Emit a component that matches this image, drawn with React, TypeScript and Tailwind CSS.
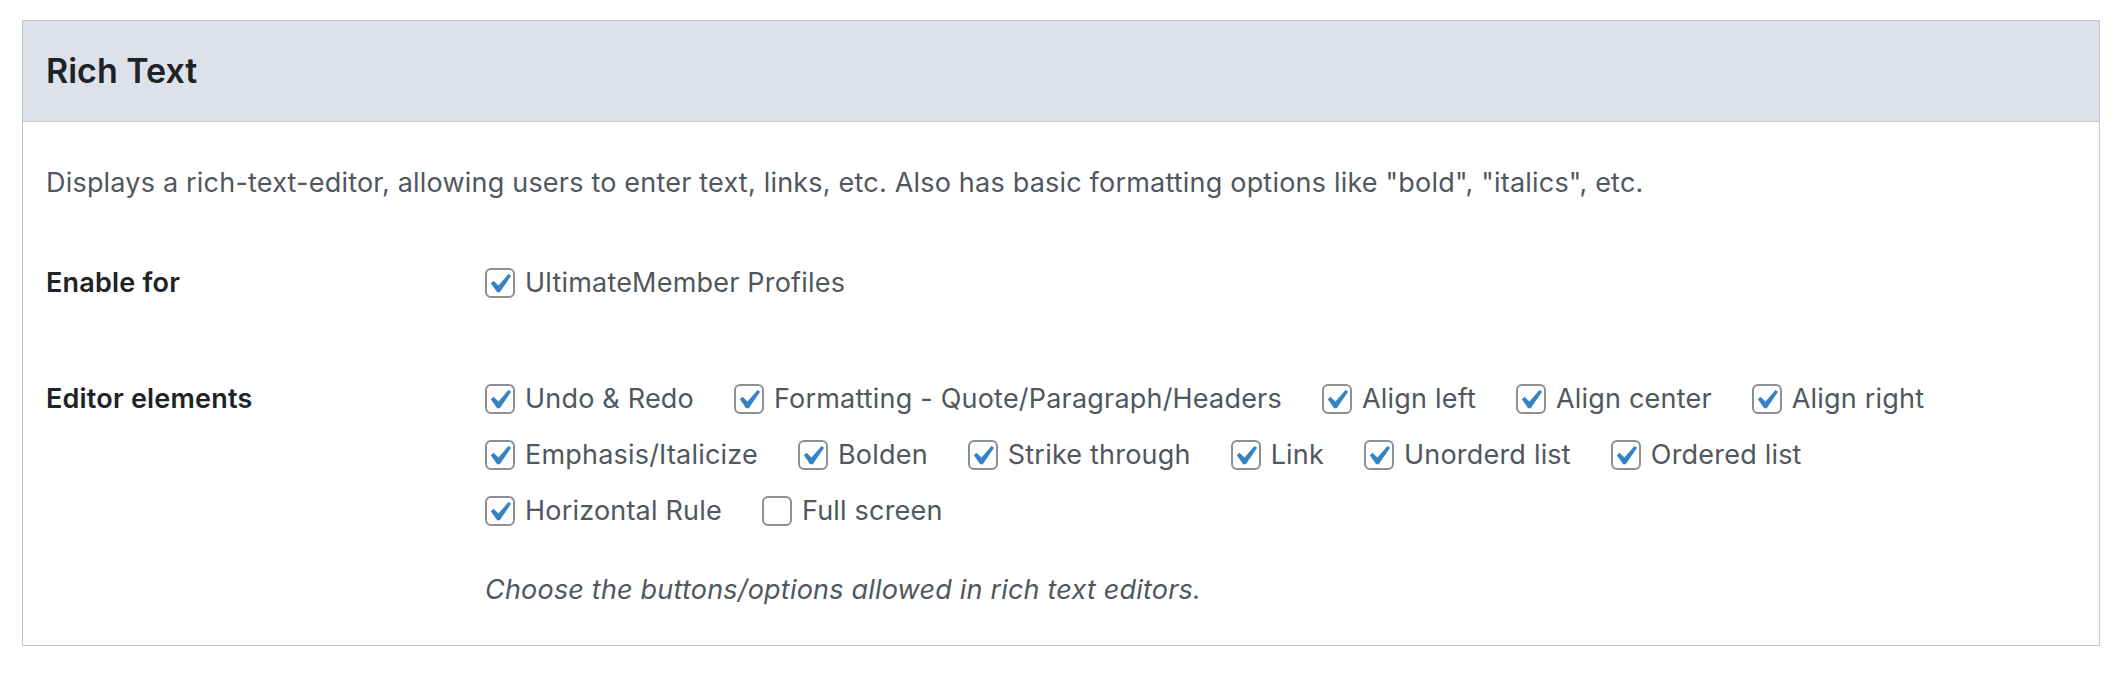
import React from 'react';

type Opt = { label: string; checked: boolean };

const rows: Opt[][] = [
  [
    { label: 'Undo & Redo', checked: true },
    { label: 'Formatting - Quote/Paragraph/Headers', checked: true },
    { label: 'Align left', checked: true },
    { label: 'Align center', checked: true },
    { label: 'Align right', checked: true },
  ],
  [
    { label: 'Emphasis/Italicize', checked: true },
    { label: 'Bolden', checked: true },
    { label: 'Strike through', checked: true },
    { label: 'Link', checked: true },
    { label: 'Unorderd list', checked: true },
    { label: 'Ordered list', checked: true },
  ],
  [
    { label: 'Horizontal Rule', checked: true },
    { label: 'Full screen', checked: false },
  ],
];

// WP style checkbox, tick taken from the admin stylesheet
const Checkbox: React.FC<{ checked: boolean }> = ({ checked }) => (
  <span className="flex h-[30px] w-[30px] shrink-0 items-center justify-center rounded-[6px] border-2 border-[#8c8f94] bg-white">
    {checked && (
      <svg viewBox="3.81 2.86 13.33 13.33" className="h-[26px] w-[26px]">
        <path d="M14.83 4.89l1.34.94-5.81 8.38H9.02L5.78 9.67l1.34-1.25 2.57 2.4z" fill="#3582c4" />
      </svg>
    )}
  </span>
);

const Option: React.FC<Opt> = ({ label, checked }) => (
  <label className="mr-[40px] flex h-[36px] items-center gap-[10px]">
    <Checkbox checked={checked} />
    <span className="whitespace-nowrap">{label}</span>
  </label>
);

export default function App() {
  return (
    <div className="min-h-screen bg-white px-[22px] pt-5 font-['Inter',sans-serif]">
      <div className="border border-[#c3c4c7] bg-white">
        <div className="flex h-[101px] items-center border-b border-[#c3c4c7] bg-[#dde1ea] pl-[23px]">
          <h2 className="text-[34px] leading-none font-semibold text-[#1d2327]">Rich Text</h2>
        </div>

        <div className="px-[23px] pt-[43px] pb-[37px] text-[27px] leading-[36px] tracking-[0.2px] text-[#50575e]">
          <p>
            Displays a rich-text-editor, allowing users to enter text, links, etc. Also has basic formatting options
            like "bold", "italics", etc.
          </p>

          <div className="mt-[64px] flex items-start">
            <div className="w-[439px] shrink-0 font-semibold text-[#1d2327]">Enable for</div>
            <Option label="UltimateMember Profiles" checked={true} />
          </div>

          <div className="mt-[80px] flex items-start">
            <div className="w-[439px] shrink-0 font-semibold text-[#1d2327]">Editor elements</div>
            <div className="flex flex-col">
              <div className="flex flex-col gap-[20px]">
                {rows.map((row, i) => (
                  <div key={i} className="flex">
                    {row.map((o) => (
                      <Option key={o.label} {...o} />
                    ))}
                  </div>
                ))}
              </div>
              <p className="mt-[43px] italic">Choose the buttons/options allowed in rich text editors.</p>
            </div>
          </div>
        </div>
      </div>
    </div>
  );
}
